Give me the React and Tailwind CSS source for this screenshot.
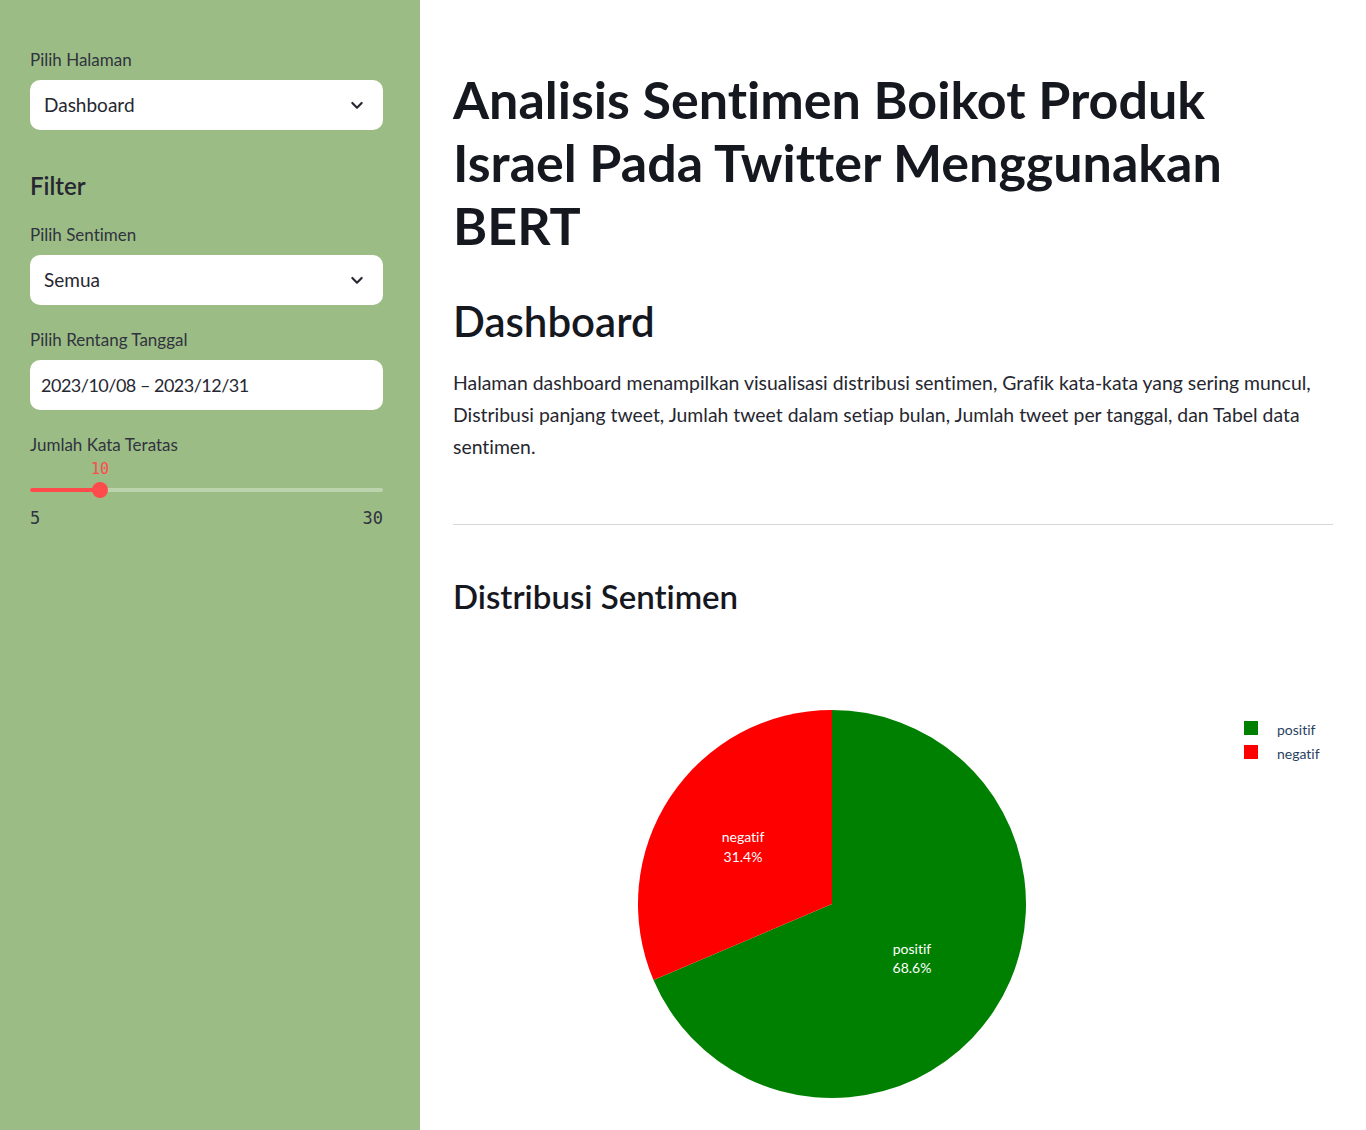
import React from "react";

const font = { fontFamily: '"Source Sans Pro", Lato, "Noto Sans", sans-serif' };
const mono = { fontFamily: '"DejaVu Sans Mono", "Liberation Mono", monospace' };

function Chevron() {
  return (
    <svg width="16" height="16" viewBox="0 0 24 24" fill="none" stroke="#262730" strokeWidth="3.2" strokeLinecap="round" strokeLinejoin="round">
      <path d="M5 9l7 7 7-7" />
    </svg>
  );
}

function Select({ value }) {
  return (
    <div className="h-[50px] w-full rounded-[10px] bg-white flex items-center justify-between pl-[14px] pr-[18px]">
      <span className="text-[19px] text-[#262730]">{value}</span>
      <Chevron />
    </div>
  );
}

function Label({ children, className = "" }) {
  return <div className={"h-[24px] leading-[24px] text-[17px] text-[#31333f] " + className}>{children}</div>;
}

function Slider() {
  return (
    <div className="flex flex-col" style={mono}>
      <div className="mt-[2px] h-[20px] leading-[20px] pl-[61px] text-[15px] text-[#ff4b4b]">10</div>
      <div className="mt-[9px] h-[4px] w-full rounded-full bg-[#bcd4ad] flex items-center">
        <div className="w-[70px] h-full rounded-full bg-[#ff4b4b]" />
        <div className="w-[16px] h-[16px] shrink-0 rounded-full bg-[#ff4b4b] -ml-[8px]" />
      </div>
      <div className="mt-[16px] h-[20px] leading-[20px] flex justify-between text-[17px] text-[#31333f]">
        <span>5</span>
        <span>30</span>
      </div>
    </div>
  );
}

function Pie() {
  const cx = 379, cy = 255, r = 194;
  const a = 0.314 * 2 * Math.PI;
  const ex = cx - r * Math.sin(a);
  const ey = cy - r * Math.cos(a);
  const neg = `M${cx} ${cy} L${cx} ${cy - r} A${r} ${r} 0 0 0 ${ex} ${ey} Z`;
  const pos = `M${cx} ${cy} L${cx} ${cy - r} A${r} ${r} 0 1 1 ${ex} ${ey} Z`;
  return (
    <svg width="880" height="480" viewBox="0 0 880 480" style={font}>
      <path d={pos} fill="#008000" />
      <path d={neg} fill="#ff0000" />
      <g fill="#ffffff" fontSize="14" textAnchor="middle">
        <text x="290" y="193">negatif</text>
        <text x="290" y="213">31.4%</text>
        <text x="459" y="305">positif</text>
        <text x="459" y="324">68.6%</text>
      </g>
      <rect x="791" y="72" width="14" height="14" fill="#008000" />
      <rect x="791" y="96" width="14" height="14" fill="#ff0000" />
      <g fill="#2a3f5f" fontSize="14">
        <text x="824" y="86">positif</text>
        <text x="824" y="110">negatif</text>
      </g>
    </svg>
  );
}

export default function App() {
  return (
    <div className="flex w-[1366px] h-[1130px] overflow-hidden bg-white [font-variant-ligatures:none]" style={font}>
      <aside className="w-[420px] shrink-0 bg-[#9bbd85] pl-[30px] pr-[37px] pt-[48px] flex flex-col">
        <Label className="mb-[8px]">Pilih Halaman</Label>
        <Select value="Dashboard" />
        <div className="mt-[40px] h-[32px] leading-[32px] text-[24px] font-semibold text-[#262730]">Filter</div>
        <Label className="mt-[21px] mb-[8px]">Pilih Sentimen</Label>
        <Select value="Semua" />
        <Label className="mt-[23px] mb-[8px]">Pilih Rentang Tanggal</Label>
        <div className="h-[50px] w-full rounded-[10px] bg-white flex items-center pl-[11px]">
          <span className="text-[18px] tracking-[-0.5px] text-[#262730]">2023/10/08 – 2023/12/31</span>
        </div>
        <Label className="mt-[23px]">Jumlah Kata Teratas</Label>
        <Slider />
      </aside>
      <main className="flex-1 px-[33px] pt-[68px]">
        <h1 className="text-[52px] leading-[63px] font-bold text-[#16181f] w-[840px]">
          Analisis Sentimen Boikot Produk Israel Pada Twitter Menggunakan BERT
        </h1>
        <h2 className="mt-[37px] text-[42px] leading-[54px] font-semibold text-[#16181f]">Dashboard</h2>
        <p className="mt-[19px] text-[19.4px] leading-[32px] text-[#262730]">
          Halaman dashboard menampilkan visualisasi distribusi sentimen, Grafik kata-kata yang sering muncul, Distribusi panjang tweet, Jumlah tweet dalam setiap bulan, Jumlah tweet per tanggal, dan Tabel data sentimen.
        </p>
        <hr className="mt-[61px] border-0 h-px bg-[#d6d6d8]" />
        <h3 className="mt-[51px] text-[33px] leading-[40px] font-semibold text-[#16181f]">Distribusi Sentimen</h3>
        <div className="mt-[33px]">
          <Pie />
        </div>
      </main>
    </div>
  );
}
